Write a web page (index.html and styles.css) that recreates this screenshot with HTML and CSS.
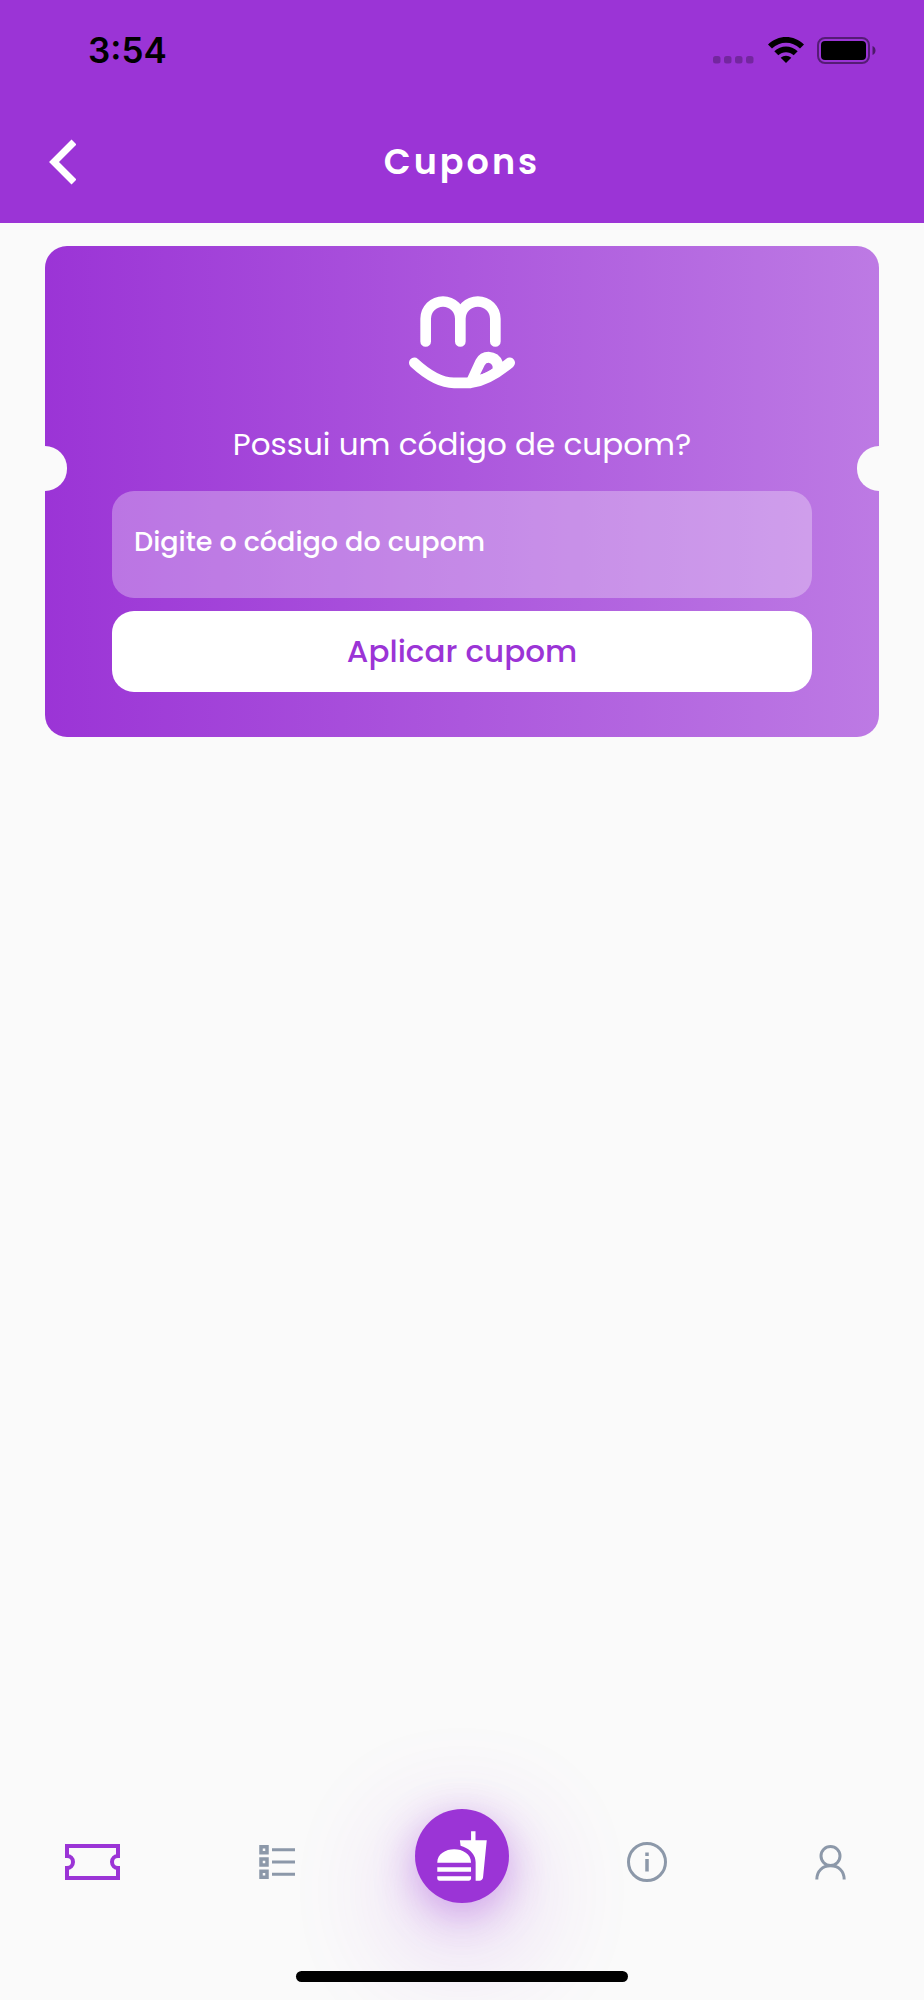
FILE: index.html
```html
<!DOCTYPE html>
<html lang="pt-BR">
<head>
    <meta charset="UTF-8">
    <meta name="viewport" content="width=device-width, initial-scale=1.0">
    <title>Cupons</title>
    <link rel="stylesheet" href="styles.css">
</head>
<body>
    <header class="header">
        <div class="status-bar">
            <span class="time">3:54</span>
            <div class="status-icons">
                <svg class="signal" width="42" height="8" viewBox="0 0 42 8">
                    <rect x="0" y="0" width="7.500" height="7.500" rx="2.500"/>
                    <rect x="11" y="0" width="7.500" height="7.500" rx="2.500"/>
                    <rect x="22" y="0" width="7.500" height="7.500" rx="2.500"/>
                    <rect x="33" y="0" width="7.500" height="7.500" rx="2.500"/>
                </svg>
                <svg class="wifi" width="36" height="26" viewBox="0 0 36 26">
                    <path d="M0 7.5C10-2.5 26-2.5 36 7.5l-4 4C24 3.8 12 3.8 4 11.500z"/>
                    <path d="M6.300 14.300c6.500-6.300 16.900-6.300 23.400 0l-4 4c-4.300-4-11.100-4-15.400 0z"/>
                    <path d="M12.700 20.700c3-2.700 7.600-2.700 10.600 0L18 26z"/>
                </svg>
                <svg width="59" height="27" viewBox="0 0 59 27">
                    <rect class="battery-case" x="1" y="1" width="51" height="25" rx="7"/>
                    <rect x="4" y="4" width="45" height="19" rx="4"/>
                    <path class="battery-tip" d="M55.500 9c4 1.500 4 7.500 0 9z"/>
                </svg>
            </div>
        </div>
        <div class="title-bar">
            <a class="back" href="#" aria-label="Voltar">
                <svg width="28" height="46" viewBox="0 0 28 46">
                    <path d="M26 3L6 23l20 20"/>
                </svg>
            </a>
            <h1>Cupons</h1>
        </div>
    </header>

    <main>
        <form class="coupon">
            <svg class="logo" width="106" height="93" viewBox="87 79 318 278">
                <path class="line" d="M137 215v-68a52 52 0 0 1 104 0v68M241 147a52.500 52 0 0 1 105 0v68"/>
                <path class="line" d="M103 279Q168 339 222 339H272Q325 332 389 279"/>
                <path fill-rule="evenodd" d="M260 328L287 270Q299 246 326 246Q358 248 368 276L376 298L300 342ZM300 315L314 286Q318 279 326 279Q339 282 338 296Q325 308 300 315Z"/>
            </svg>
            <label for="code">Possui um código de cupom?</label>
            <input type="text" id="code" name="code" placeholder="Digite o código do cupom">
            <button type="submit">Aplicar cupom</button>
        </form>
    </main>

    <footer>
        <nav class="tabs">
            <a href="#" class="active" aria-label="Cupons">
                <svg width="55" height="36" viewBox="0 0 55 36">
                    <path stroke-width="4" d="M2 2h51v10a6 6 0 0 0 0 12v10H2V24a6 6 0 0 0 0-12z"/>
                </svg>
            </a>
            <a href="#" aria-label="Pedidos">
                <svg width="37" height="36" viewBox="0 0 37 36">
                    <path stroke-width="3.500" d="M2 2.700h6v6H2zM2 15h6v6H2zM2 27.300h6v6H2z"/>
                    <path stroke-width="3" d="M13 5.800h23M13 18h23M13 30.200h23"/>
                </svg>
            </a>
            <a href="#" class="home" aria-label="Lanches">
                <svg width="54" height="54" viewBox="0 0 24 24">
                    <path d="M18.060 22.990h1.660c.84 0 1.530-.64 1.630-1.460L23 5.050h-5V1h-1.970v4.050h-4.970l.3 2.340c1.710.47 3.310 1.320 4.270 2.260 1.440 1.420 2.430 2.890 2.430 5.290v8.050zM1 21.990V21h15.030v.99c0 .55-.45 1-1.010 1H2.010c-.56 0-1.010-.45-1.010-1zm15.030-7c0-8-15.030-8-15.030 0h15.030zM1.020 17h15v2h-15z"/>
                </svg>
            </a>
            <a href="#" aria-label="Informações">
                <svg width="40" height="40" viewBox="0 0 40 40">
                    <circle cx="20" cy="20" r="18.500" stroke-width="3"/>
                    <path stroke-width="3.500" d="M20 10.500v3.500M20 17v12.500"/>
                </svg>
            </a>
            <a href="#" aria-label="Perfil">
                <svg width="34" height="36" viewBox="0 0 34 36">
                    <circle cx="15.500" cy="12" r="9.500" stroke-width="3"/>
                    <path stroke-width="3" d="M1.800 35.500C1.800 27 7.500 21.800 15.500 21.800S29.200 27 29.200 35.500"/>
                </svg>
            </a>
        </nav>
        <div class="home-indicator"></div>
    </footer>
</body>
</html>
```

FILE: styles.css
```css
* {
    box-sizing: border-box;
}

body {
    font-family: Poppins, Inter, sans-serif;
    display: flex;
    flex-direction: column;
    min-height: 100vh;
    margin: 0;
    background-color: #fafafa;
    overflow-x: hidden;
}

/* Header */
.header {
    background-color: #9b34d6;
    color: #fff;
}

.status-bar {
    display: flex;
    align-items: center;
    justify-content: space-between;
    height: 100px;
    padding: 0 48px 0 88px;
    color: #000;
}

.time {
    font-family: Inter, sans-serif;
    font-size: 35px;
    font-weight: 600;
}

.status-icons {
    display: flex;
    align-items: center;
    gap: 13px;
}

.signal {
    align-self: flex-end;
    opacity: 0.25;
}

.battery-case {
    fill: none;
    stroke: #000;
    stroke-width: 2;
    opacity: 0.45;
}

.battery-tip {
    opacity: 0.5;
}

.title-bar {
    display: grid;
    grid-template-columns: 1fr auto 1fr;
    align-items: center;
    height: 123px;
    padding: 0 48px;
}

.back {
    display: flex;
}

.back path {
    fill: none;
    stroke: #fff;
    stroke-width: 7;
}

h1 {
    margin: 0;
    font-size: 35px;
    font-weight: 600;
    letter-spacing: 3px;
}

/* Coupon card */
main {
    flex: 1;
    padding: 23px 45px;
}

.coupon {
    position: relative;
    display: flex;
    flex-direction: column;
    align-items: center;
    padding: 50px 67px 45px;
    border-radius: 22px;
    background: linear-gradient(to right, #9b34d6, #bd7ae4);
}

/* Ticket notches */
.coupon::before,
.coupon::after {
    content: "";
    position: absolute;
    top: 200px;
    width: 22px;
    height: 45px;
    background-color: #fafafa;
}

.coupon::before {
    left: 0;
    border-radius: 0 22px 22px 0;
}

.coupon::after {
    right: 0;
    border-radius: 22px 0 0 22px;
}

.logo {
    fill: #fff;
}

.logo .line {
    fill: none;
    stroke: #fff;
    stroke-width: 32;
    stroke-linecap: round;
}

.coupon label {
    margin: 31px 0 23px;
    color: #fff;
    font-size: 31px;
    line-height: 48px;
}

.coupon input {
    width: 100%;
    height: 107px;
    margin-bottom: 13px;
    padding: 0 22px 6px;
    border: none;
    border-radius: 22px;
    background-color: rgba(255, 255, 255, 0.3);
    color: #fff;
    font-family: inherit;
    font-size: 27px;
    font-weight: 500;
}

.coupon input::placeholder {
    color: #fff;
    opacity: 1;
}

.coupon button {
    width: 100%;
    height: 81px;
    border: none;
    border-radius: 22px;
    background-color: #fff;
    color: #9b34d6;
    font-family: inherit;
    font-size: 31px;
    font-weight: 500;
    cursor: pointer;
}

/* Bottom navigation */
.tabs {
    display: grid;
    grid-template-columns: repeat(5, 1fr);
    align-items: center;
    justify-items: center;
    height: 108px;
    margin-bottom: 55px;
}

.tabs a {
    display: flex;
    color: #8c98a9;
}

.tabs a.active {
    color: #9b34d6;
}

.tabs svg {
    fill: none;
    stroke: currentColor;
}

.tabs a.home {
    align-items: center;
    justify-content: center;
    width: 94px;
    height: 94px;
    margin-bottom: 12px;
    border-radius: 50%;
    background-color: #9b34d6;
    box-shadow: 0 10px 40px rgba(155, 52, 214, 0.4), 0 34px 112px 16px rgba(155, 52, 214, 0.22);
}

.tabs .home svg {
    fill: #fff;
    stroke: none;
}

/* Sits above the glow of the home tab */
.home-indicator {
    position: relative;
    width: 36%;
    height: 11px;
    margin: 0 auto 18px;
    border-radius: 6px;
    background-color: #000;
}
```
